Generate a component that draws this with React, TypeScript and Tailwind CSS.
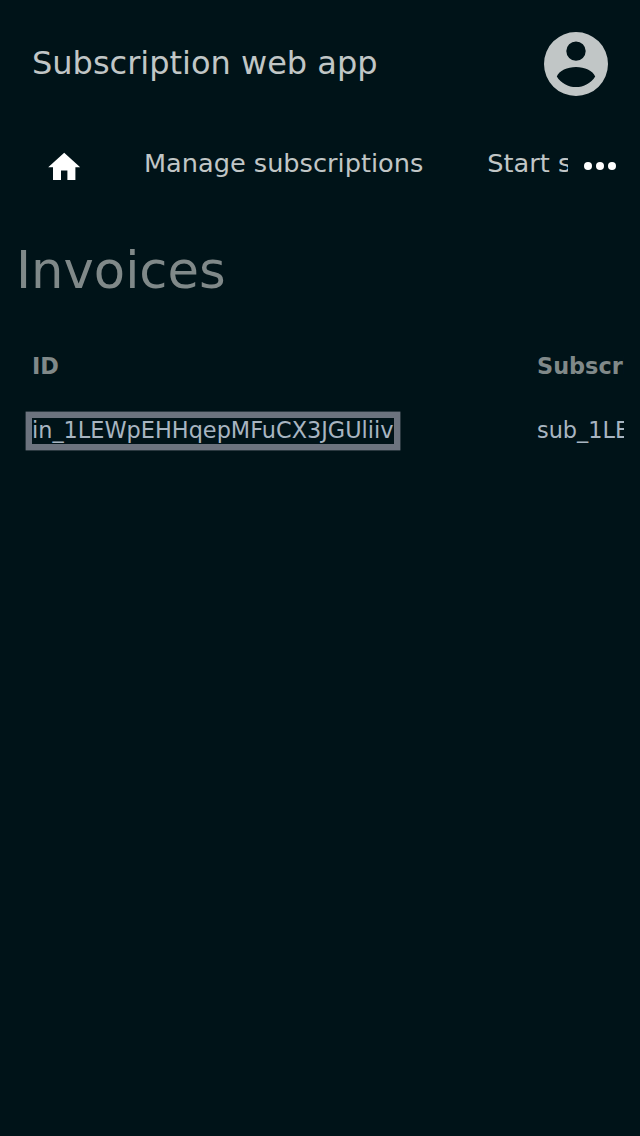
import { MdHome } from "react-icons/md";

function AccountIcon() {
  return (
    <svg viewBox="0 0 64 64" className="size-16 shrink-0" fill="currentColor" fillRule="evenodd" aria-hidden="true">
      <path d="M32 0A32 32 0 1 0 32 64A32 32 0 1 0 32 0ZM32 9.4A9.6 9.6 0 1 1 32 28.8A9.6 9.6 0 1 1 32 9.4ZM12.8 44.5C15 38.5 23.5 34.9 32 34.9S49 38.5 51.2 44.5C47 51.2 39.8 55.1 32 55.1S17 51.2 12.8 44.5Z" />
    </svg>
  );
}

export default function App() {
  return (
    <div className="h-[1136px] w-[640px] overflow-hidden bg-[#001318] [font-family:'DejaVu_Sans',sans-serif] text-[#c1c6c6]">
      <header className="flex h-32 items-center justify-between px-8">
        <h1 className="pb-0.5 text-[32px] leading-[38px]">Subscription web app</h1>
        <AccountIcon />
      </header>
      <nav className="flex h-[72px] items-center">
        <div className="flex w-[568px] shrink-0 items-center overflow-hidden whitespace-nowrap text-[25.6px] leading-8">
          <a className="w-32 shrink-0 pt-[5.5px] pl-[44.8px] text-white"><MdHome className="size-[38.4px]" /></a>
          <a className="ml-4 shrink-0 pb-[2px]">Manage subscriptions</a>
          <a className="ml-16 shrink-0 pb-[2px]">Start subscription</a>
        </div>
        <button aria-label="More" className="mt-1 ml-4 flex gap-1">
          <span className="size-2 rounded-full bg-white" />
          <span className="size-2 rounded-full bg-white" />
          <span className="size-2 rounded-full bg-white" />
        </button>
      </nav>
      <main className="px-4 pt-10">
        <h2 className="text-[51.2px] leading-[60px] text-[#808989]">Invoices</h2>
        <div className="-ml-4 overflow-hidden pt-[34px] pl-4">
          <table className="w-[1010px] table-fixed border-collapse text-left text-[22.4px] leading-[26px] whitespace-nowrap">
            <thead>
              <tr className="h-16 text-[#808989]">
                <th className="w-[505px] pl-4 font-bold">ID</th>
                <th className="pl-4 font-bold">Subscription</th>
              </tr>
            </thead>
            <tbody>
              <tr className="h-16 text-[#a8b5c1]">
                <td className="pl-4"><a className="-mb-px inline-block pb-0.5 leading-6 shadow-[0_0_0_6.4px_#6c737e]">in_1LEWpEHHqepMFuCX3JGUliiv</a></td>
                <td className="pl-4">sub_1LEWpE</td>
              </tr>
            </tbody>
          </table>
        </div>
      </main>
    </div>
  );
}
